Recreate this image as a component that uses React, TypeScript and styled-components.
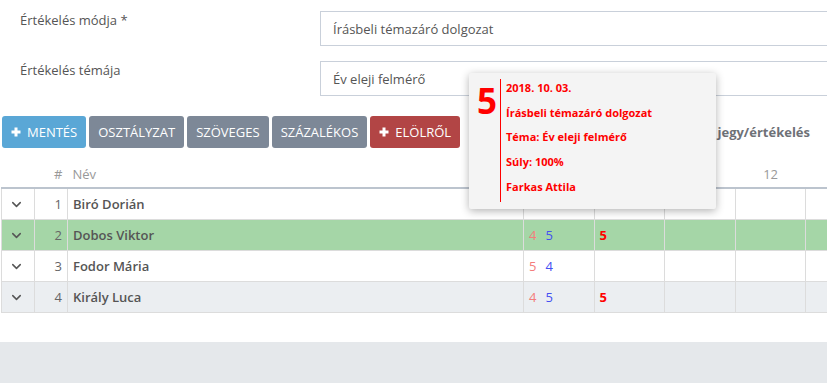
import styled, { createGlobalStyle } from "styled-components";
import { ChevronDown } from "lucide-react";

const GlobalStyle = createGlobalStyle`
  html, body {
    margin: 0;
    padding: 0;
  }
  body {
    font-family: "Open Sans", "Noto Sans", sans-serif;
    background: #e5e8eb;
    overflow: hidden;
  }
`;

const Page = styled.div`
  width: 827px;
  height: 383px;
  overflow: hidden;
`;

const Content = styled.div`
  position: relative;
  background: #fff;
  padding: 11px 0 29px 0;
`;

const FormRow = styled.div`
  display: flex;
  align-items: flex-start;
  height: 35px;

  & + & {
    margin-top: 15px;
  }
`;

const Label = styled.label`
  width: 300px;
  padding-left: 20px;
  font-size: 13px;
  line-height: 18px;
  color: #555;
`;

const Input = styled.input`
  flex: 1;
  box-sizing: border-box;
  height: 35px;
  border: 1px solid #c9d0da;
  border-right: none;
  padding: 0 12px;
  font-family: inherit;
  font-size: 13px;
  color: #555;
  outline: none;
`;

const Toolbar = styled.div`
  display: flex;
  align-items: center;
  gap: 3px;
  height: 32px;
  margin-top: 20px;
  padding-left: 2px;
`;

const Button = styled.button<{ $variant: "primary" | "default" | "danger" }>`
  display: flex;
  align-items: center;
  gap: 6px;
  height: 32px;
  padding: 0 9px;
  border: none;
  border-radius: 3px;
  font-family: inherit;
  font-size: 13px;
  color: #fff;
  text-transform: uppercase;
  background: ${(p) =>
    p.$variant === "primary" ? "#5aa7d6" : p.$variant === "danger" ? "#b24545" : "#7d8897"};
`;

const ToolbarTitle = styled.div`
  margin-left: auto;
  padding-right: 17px;
  font-size: 13px;
  font-weight: 700;
  color: #6e7177;
  white-space: nowrap;
`;

const Table = styled.table`
  margin: 8px 0 0 1px;
  border-collapse: collapse;
  table-layout: fixed;
  width: 875px;
  font-size: 13px;
  color: #555;
`;

const Th = styled.th<{ $align?: string }>`
  height: 27px;
  padding: 4px 5px 0;
  border-bottom: 2px solid #bcc4ce;
  font-weight: 400;
  color: #999;
  text-align: ${(p) => p.$align || "left"};
  vertical-align: middle;
`;

const Row = styled.tr<{ $tone?: "green" | "gray" }>`
  background: ${(p) => (p.$tone === "green" ? "#a5d6a7" : p.$tone === "gray" ? "#ebeef1" : "#fff")};
`;

const Td = styled.td<{ $align?: string }>`
  height: 30px;
  padding: 0 5px;
  border: 1px solid #dcdcdc;
  border-top: none;
  text-align: ${(p) => p.$align || "left"};
  vertical-align: middle;
  white-space: nowrap;
`;

const ChevronCell = styled(Td)`
  padding-left: 7px;
  line-height: 0;
  color: #555;
`;

const NameCell = styled(Td)`
  font-weight: 600;
`;

const NumCell = styled(Td)`
  color: #666;
`;

const Grade = styled.span<{ $kind: "low" | "high" | "final" }>`
  margin-right: 9px;
  color: ${(p) => (p.$kind === "low" ? "#f47c7c" : p.$kind === "high" ? "#4450f2" : "#ff0000")};
  font-weight: ${(p) => (p.$kind === "final" ? 700 : 400)};
`;

const Tooltip = styled.div`
  position: absolute;
  left: 469px;
  top: 73px;
  width: 247px;
  box-sizing: border-box;
  display: flex;
  padding: 6px 0 7px 8px;
  background: #f4f4f4;
  border-radius: 2px;
  box-shadow: 0 2px 9px rgba(0, 0, 0, 0.3);
  color: #ff0000;
`;

const BigGrade = styled.div`
  width: 23px;
  font-size: 35px;
  font-weight: 700;
  line-height: 44px;
`;

const TooltipBody = styled.div`
  border-left: 1.5px solid #ff0000;
  padding-left: 5px;
  height: 123px;
`;

const TooltipLine = styled.div`
  font-size: 11px;
  font-weight: 700;
  line-height: 24.7px;
  white-space: nowrap;
  position: relative;
  top: -3px;
`;

const PlusIcon = () => (
  <svg width="10" height="10" viewBox="0 0 10 10">
    <path d="M5 0.5v9M0.5 5h9" stroke="#fff" strokeWidth="3" />
  </svg>
);

type Student = {
  id: number;
  name: string;
  grades: { v: string; kind: "low" | "high" }[];
  final?: string;
  tone?: "green" | "gray";
};

const students: Student[] = [
  { id: 1, name: "Biró Dorián", grades: [] },
  {
    id: 2,
    name: "Dobos Viktor",
    grades: [
      { v: "4", kind: "low" },
      { v: "5", kind: "high" },
    ],
    final: "5",
    tone: "green",
  },
  {
    id: 3,
    name: "Fodor Mária",
    grades: [
      { v: "5", kind: "low" },
      { v: "4", kind: "high" },
    ],
  },
  {
    id: 4,
    name: "Király Luca",
    grades: [
      { v: "4", kind: "low" },
      { v: "5", kind: "high" },
    ],
    final: "5",
    tone: "gray",
  },
];

const gradeCols = [0, 1, 2, 3, 4];

const App = () => {
  return (
    <Page>
      <GlobalStyle />
      <Content>
        <FormRow>
          <Label>Értékelés módja *</Label>
          <Input readOnly value="Írásbeli témazáró dolgozat" />
        </FormRow>
        <FormRow>
          <Label>Értékelés témája</Label>
          <Input readOnly value="Év eleji felmérő" />
        </FormRow>

        <Toolbar>
          <Button $variant="primary">
            <PlusIcon />
            Mentés
          </Button>
          <Button $variant="default">Osztályzat</Button>
          <Button $variant="default">Szöveges</Button>
          <Button $variant="default">Százalékos</Button>
          <Button $variant="danger">
            <PlusIcon />
            Elölről
          </Button>
          <ToolbarTitle>Tanulók 2018/2019. I. félévi témazáró jegy/értékelés</ToolbarTitle>
        </Toolbar>

        <Table>
          <colgroup>
            <col style={{ width: 33 }} />
            <col style={{ width: 33 }} />
            <col style={{ width: 456 }} />
            {gradeCols.map((c) => (
              <col key={c} style={{ width: 70.6 }} />
            ))}
          </colgroup>
          <thead>
            <tr>
              <Th />
              <Th $align="right">#</Th>
              <Th>Név</Th>
              <Th />
              <Th />
              <Th />
              <Th $align="center">12</Th>
              <Th />
            </tr>
          </thead>
          <tbody>
            {students.map((s) => (
              <Row key={s.id} $tone={s.tone}>
                <ChevronCell>
                  <ChevronDown size={15} strokeWidth={2.4} />
                </ChevronCell>
                <NumCell $align="right">{s.id}</NumCell>
                <NameCell>{s.name}</NameCell>
                <Td>
                  {s.grades.map((g, i) => (
                    <Grade key={i} $kind={g.kind}>
                      {g.v}
                    </Grade>
                  ))}
                </Td>
                <Td>{s.final && <Grade $kind="final">{s.final}</Grade>}</Td>
                <Td />
                <Td />
                <Td />
              </Row>
            ))}
          </tbody>
        </Table>

        <Tooltip>
          <BigGrade>5</BigGrade>
          <TooltipBody>
            <TooltipLine>2018. 10. 03.</TooltipLine>
            <TooltipLine>Írásbeli témazáró dolgozat</TooltipLine>
            <TooltipLine>Téma: Év eleji felmérő</TooltipLine>
            <TooltipLine>Súly: 100%</TooltipLine>
            <TooltipLine>Farkas Attila</TooltipLine>
          </TooltipBody>
        </Tooltip>
      </Content>
    </Page>
  );
};

export default App;
